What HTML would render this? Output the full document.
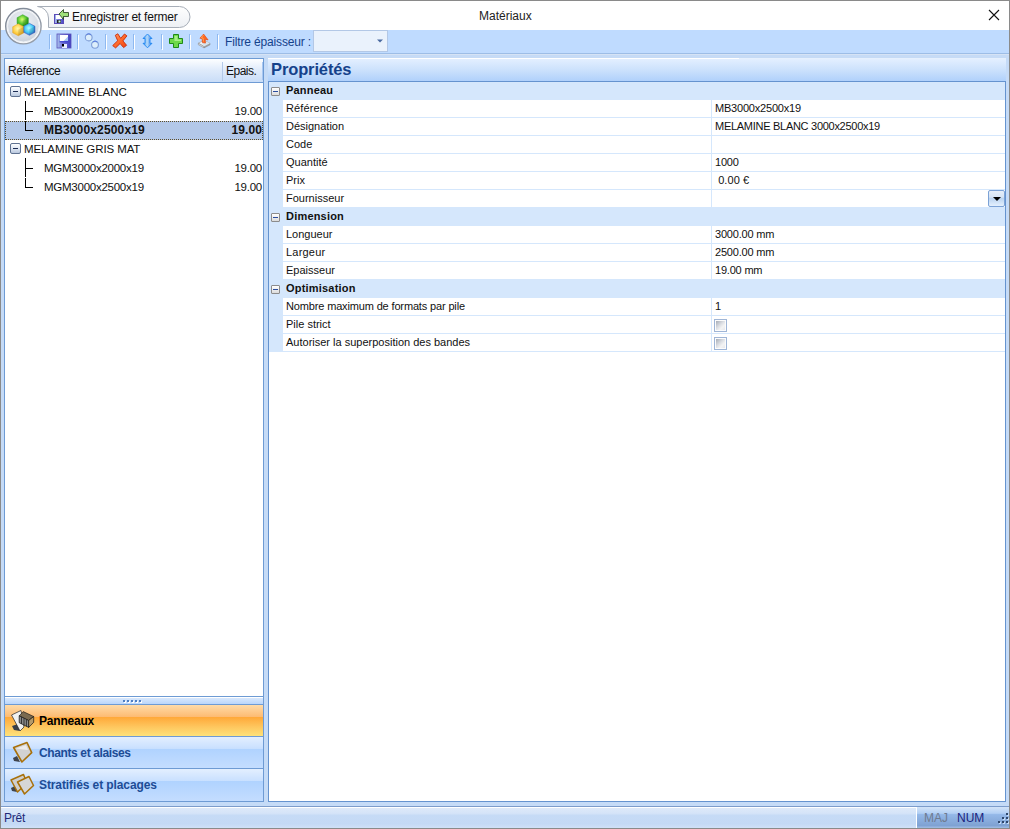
<!DOCTYPE html>
<html><head><meta charset="utf-8">
<style>
*{margin:0;padding:0;box-sizing:border-box}
html,body{width:1010px;height:829px;overflow:hidden;background:#c5dbf7;font-family:"Liberation Sans",sans-serif}
div,span,svg{position:absolute}
#bl{left:0;top:0;width:1px;height:829px;background:#8a8a8a}
#br{left:1009px;top:0;width:1px;height:829px;background:#8a8a8a}
#bt{left:0;top:0;width:1010px;height:1px;background:#8a8a8a}
#title{left:1px;top:1px;width:1008px;height:29px;background:#fff}
#ttext{left:479px;top:9px;font-size:12px;color:#222;white-space:pre}
#tb{left:1px;top:30px;width:1008px;height:23px;background:#bfdbff}
#tbline{left:1px;top:53px;width:1008px;height:1px;background:#9dbde6}
#strip{left:1px;top:54px;width:1008px;height:4px;background:linear-gradient(#d6e3f5 0,#d6e3f5 1px,#c6dbf6 1px)}
.sep{top:35px;width:2px;height:15px;border-left:1px solid #9fbfe8;border-right:1px solid #fff}
#tab{left:38px;top:6px;width:152px;height:22px;border:1px solid #a9b3bf;border-radius:3px 11px 11px 3px;background:linear-gradient(#fdfdfe,#eef1f5)}
#tabtxt{left:72px;top:10px;font-size:12px;color:#111;white-space:pre;letter-spacing:-0.22px}
#left{left:4px;top:58px;width:260px;height:744px;border:1px solid #6e9bd4;background:#fff}
#lhdr{left:0;top:0;width:258px;height:24px;background:linear-gradient(#fdfeff,#e1ecfb 45%,#c9ddf8);border-bottom:1px solid #6e9bd4}
.ht{top:5px;font-size:12px;color:#111;white-space:pre}
.tr{left:0;width:258px;height:19px;font-size:11.5px;color:#111;white-space:pre}
.tr span{top:3px;letter-spacing:-0.25px}
#right{left:268px;top:58px;width:738px;height:744px}
#phdr{left:0;top:0;width:738px;height:23px;background:linear-gradient(#e6f0fd 0,#e6f0fd 1px,#e3efff 1px,#cde2fc 50%,#b0d1fb)}
#ptxt{left:3px;letter-spacing:-0.12px;top:2px;font-size:16.5px;font-weight:bold;color:#15428b;white-space:pre}
#grid{left:0;top:23px;width:738px;height:721px;border:1px solid #6593cf;background:#fff}
.cat{left:0;width:736px;height:18px;background:#d5e7fc}
.cat span{left:17px;top:2px;font-size:11px;letter-spacing:0.2px;font-weight:bold;color:#111;white-space:pre}
.row{left:0;width:736px;height:18px;background:#fff;border-bottom:1px solid #d5e7fc}
.row .lm{left:0;top:-1px;width:14px;height:19px;background:#d5e7fc}
.row .k{left:17px;top:2px;font-size:11px;letter-spacing:0;color:#111;white-space:pre}
.row .vs{left:442px;top:0;width:1px;height:17px;background:#d5e7fc}
.row .v{left:446px;top:2px;font-size:11px;letter-spacing:-0.2px;color:#111;white-space:pre}
.mb{width:9px;height:9px;border:1px solid #8c8c8c;border-radius:1px;background:linear-gradient(#fff,#dcdcdc)}
.mb::after{content:"";position:absolute;left:1px;top:3px;width:5px;height:1px;background:#2b4d9e}
#status{left:1px;top:807px;width:1008px;height:21px;background:linear-gradient(#fff 0,#fff 1px,#dde9f9 1px,#d5e4f8 30%,#c6dbf6 40%,#c4d9f5 80%,#d0e1f7)}
#stline{left:1px;top:806px;width:1008px;height:1px;background:#7c9ccb}
#bb{left:0;top:828px;width:1010px;height:1px;background:#8a8a8a}
#st2{left:917px;top:807px;width:92px;height:21px;background:linear-gradient(#d2e3f8,#b2cff4 30%,#94b8e8 36%,#7fa2d3 88%,#a0bde4)}

.dd{left:719px;top:0;width:17px;height:17px;border:1px solid #7ca2d6;border-radius:2px;background:linear-gradient(#e6eef8,#d6e4f5 40%,#bcd4f0 50%,#d8e8fa 85%,#e4f0fd)}
.dd::after{content:"";position:absolute;left:3.5px;top:6px;border-left:4px solid transparent;border-right:4px solid transparent;border-top:4px solid #000}
.cb{left:445px;top:3px;width:13px;height:13px;border:1px solid #9fb5d6;background:#fcfcfc}
.cb::after{content:"";position:absolute;left:1px;top:1px;width:9px;height:9px;background:linear-gradient(135deg,#a6acb6,#dcdfe4 45%,#f4f4f4 70%,#e6e8ec)}

.nb{left:0;width:258px;height:31px;background:linear-gradient(#e3efff,#c9e0ff 37%,#b0d3ff 39%,#c4ddff)}
.nb.sel{background:linear-gradient(#ffdba8,#fdbb72 38%,#ffa838 39%,#fec65e 70%,#fee27a)}
.nb span{left:34px;top:9px;font-size:12px;font-weight:bold;color:#1d4c96;white-space:pre;letter-spacing:-0.2px}
.tm{width:11px;height:11px;border-color:#5f7291;border-radius:2px;background:linear-gradient(#fdfeff,#dfe7f3 50%,#b9c8de)}
.tm::after{left:2px;top:4px;width:5px;height:1px;background:#1f2f55}
</style></head><body>
<div id="bt"></div><div id="bl"></div><div id="br"></div>
<div id="title">
</div>
<span id="ttext">Matériaux</span>
<svg style="left:988px;top:9px" width="12" height="12" viewBox="0 0 12 12"><path d="M1 1L11 11M11 1L1 11" stroke="#111" stroke-width="1.1"/></svg>
<div id="tb"></div>
<div id="tbline"></div>
<div id="strip"></div>
<svg style="left:30px;top:0" width="170" height="32" viewBox="30 0 170 32"><defs><linearGradient id="tg" x1="0" y1="0" x2="0" y2="1"><stop offset="0" stop-color="#fefefe"/><stop offset="1" stop-color="#edf0f4"/></linearGradient></defs><path d="M37.5 6.5H179.5A10.5 10.5 0 0 1 179.5 27.5H48.5V18A11.5 11.5 0 0 0 37.5 6.5Z" fill="url(#tg)" stroke="#a7aeb8" stroke-width="1"/></svg>
<span id="tabtxt">Enregistrer et fermer</span>
<svg style="left:0;top:0" width="50" height="50" viewBox="0 0 50 50">
 <defs>
  <radialGradient id="lg" cx="0.5" cy="0.35" r="0.65"><stop offset="0" stop-color="#eef1f5"/><stop offset="0.7" stop-color="#d9dee6"/><stop offset="1" stop-color="#c8cfd9"/></radialGradient>
 </defs>
 <defs><linearGradient id="rg" x1="0" y1="0" x2="1" y2="1"><stop offset="0" stop-color="#7c8593"/><stop offset="1" stop-color="#9aa2ae"/></linearGradient></defs><circle cx="23.4" cy="26.2" r="17.7" fill="#f6f7f9" stroke="url(#rg)" stroke-width="1.4"/>
 <circle cx="23.4" cy="26.2" r="15.8" fill="url(#lg)" stroke="#eef1f5" stroke-width="1"/>
<defs><radialGradient id="cg" cx="0.45" cy="0.4" r="0.65"><stop offset="0" stop-color="#d8ff70"/><stop offset="0.55" stop-color="#5cc830"/><stop offset="1" stop-color="#149a18"/></radialGradient></defs>
 <g transform="translate(22.7,20.7)"><path d="M0 -6L5.6 -3V3L0 6L-5.6 3V-3Z" fill="url(#cg)" stroke="#2a9a20" stroke-width="0.5" stroke-linejoin="round"/><path d="M5.6 -3V3L0 6V0Z" fill="#000" opacity="0.12"/></g>
<defs><radialGradient id="yg" cx="0.45" cy="0.4" r="0.65"><stop offset="0" stop-color="#fff6b0"/><stop offset="0.55" stop-color="#ffd24a"/><stop offset="1" stop-color="#f0a818"/></radialGradient></defs>
 <g transform="translate(18.3,29.8)"><path d="M0 -6L5.6 -3V3L0 6L-5.6 3V-3Z" fill="url(#yg)" stroke="#e0a020" stroke-width="0.5" stroke-linejoin="round"/><path d="M5.6 -3V3L0 6V0Z" fill="#000" opacity="0.12"/></g>
<defs><radialGradient id="bg" cx="0.45" cy="0.4" r="0.65"><stop offset="0" stop-color="#b0f8ff"/><stop offset="0.55" stop-color="#48ccf6"/><stop offset="1" stop-color="#2a66d0"/></radialGradient></defs>
 <g transform="translate(29.4,29.3)"><path d="M0 -6L5.6 -3V3L0 6L-5.6 3V-3Z" fill="url(#bg)" stroke="#3050c0" stroke-width="0.5" stroke-linejoin="round"/><path d="M5.6 -3V3L0 6V0Z" fill="#000" opacity="0.12"/></g>
</svg>
<svg style="left:53px;top:8px" width="18" height="18" viewBox="0 0 18 18">
 <defs><linearGradient id="fg2" x1="0" y1="0" x2="1" y2="0"><stop offset="0" stop-color="#a9c6ef"/><stop offset="0.4" stop-color="#7a7ad8"/><stop offset="1" stop-color="#4848c8"/></linearGradient></defs><rect x="1.5" y="6.5" width="9" height="9" fill="url(#fg2)" stroke="#5a4ab8"/>
 <rect x="3" y="7" width="6" height="4" fill="#fff"/>
 <rect x="4" y="12" width="4" height="3" fill="#222"/><rect x="5.5" y="12.5" width="2" height="2" fill="#cfe"/>
 <path d="M6 6L10.5 1.5L10.5 4.5L15.5 4.5L15.5 8.5L10.5 8.5L10.5 11.5Z" fill="#9ee07a" stroke="#1f3a18" stroke-width="0.8"/>
</svg>
<svg style="left:56px;top:33px" width="16" height="16" viewBox="0 0 16 16">
 <defs><linearGradient id="fg" x1="0" y1="0" x2="1" y2="0"><stop offset="0" stop-color="#a9c6ef"/><stop offset="0.35" stop-color="#7a7ad8"/><stop offset="1" stop-color="#4040c0"/></linearGradient></defs>
 <rect x="1" y="1" width="14" height="14" fill="url(#fg)"/>
 <rect x="1" y="1" width="14" height="14" fill="none" stroke="#5a50b8" stroke-width="0.8"/>
 <rect x="4" y="2" width="8" height="6" fill="#fff"/><path d="M12 3.5V8H7.5Z" fill="#a8c8f5"/>
 <rect x="3.5" y="8.3" width="9" height="1" fill="#3a40d0"/>
 <rect x="6" y="11" width="5" height="4" fill="#e8f0ff"/><rect x="6" y="11" width="2" height="2.5" fill="#000"/>
</svg>
<svg style="left:83px;top:33px" width="16" height="16" viewBox="0 0 16 16">
 <path d="M6 5L12 11.5" stroke="#d4f0fb" stroke-width="3"/>
 <circle cx="5.7" cy="4.5" r="3.4" fill="#ddeefb" stroke="#7f9ed8" stroke-width="1.1"/>
 <circle cx="12" cy="11.8" r="3.4" fill="#ddeefb" stroke="#7f9ed8" stroke-width="1.1"/>
 <path d="M3.5 1.6A3.4 3.4 0 0 1 8 1.6M9.8 8.9A3.4 3.4 0 0 1 14.2 8.9" stroke="#5a7ee0" stroke-width="1" fill="none"/>
</svg>
<svg style="left:112px;top:33px" width="16" height="16" viewBox="0 0 16 16">
 <defs><linearGradient id="xg" x1="0" y1="0" x2="1" y2="1"><stop offset="0" stop-color="#ff9a6a"/><stop offset="0.5" stop-color="#ff6a2a"/><stop offset="1" stop-color="#f04010"/></linearGradient></defs>
 <path d="M3.3 2.3L5.8 0.8L8.7 5.3L12.5 1L14.9 2.9L10.9 7.9L14.6 12.3L11.6 14.6L8.1 10.5L3.6 14.9L0.7 12.6L5.7 7.7Z" fill="url(#xg)" stroke="#c82a08" stroke-width="0.9" stroke-linejoin="round"/>
</svg>
<svg style="left:142px;top:33px" width="12" height="16" viewBox="0 0 12 16">
 <defs><linearGradient id="ag" x1="0" y1="0" x2="1" y2="0"><stop offset="0" stop-color="#2a8af0"/><stop offset="0.45" stop-color="#b8dcfa"/><stop offset="1" stop-color="#2a7ae8"/></linearGradient></defs>
 <path d="M5.5 1L10 5.5H8V10.3H10L5.5 14.8L1 10.3H3V5.5H1Z" fill="url(#ag)" stroke="#1f86f0" stroke-width="0.9" stroke-linejoin="round"/>
</svg>
<svg style="left:168px;top:33px" width="16" height="16" viewBox="0 0 16 16">
 <path d="M5.5 1.5H10.5V5.5H14.5V10.5H10.5V14.5H5.5V10.5H1.5V5.5H5.5Z" fill="#6ed84a" stroke="#1f8a1a" stroke-width="1"/>
 <path d="M6.5 3H9.5V6.5H13V8H6.5Z" fill="#a8f08a"/>
</svg>
<svg style="left:196px;top:33px" width="16" height="16" viewBox="0 0 16 16">
 <path d="M2.3 10.2L8 7.3L14 10.3L8 13.4Z" fill="#f4f4f4" stroke="#9a9a9a" stroke-width="0.6"/>
 <path d="M2.3 10.2V11.8L8 14.9V13.4Z" fill="#d8d8d8" stroke="#8a8a8a" stroke-width="0.5"/>
 <path d="M8 13.4V14.9L14 11.8V10.3Z" fill="#a8a8a8" stroke="#7a7a7a" stroke-width="0.5"/>
 <path d="M5.5 9.8L8.8 8.3L14 10.3L8 13.4Z" fill="#d6e4ee"/>
 <path d="M7.6 1.1L3.9 5.2L6 5.6L6.5 9.6L9.5 10.1L9.1 6.3L12.1 6.9Z" fill="#ff6a1e" stroke="#e03a08" stroke-width="0.6" stroke-linejoin="round"/>
 <path d="M7.6 1.8L5.2 4.7L7 5L7.5 8.5" fill="none" stroke="#ffaa66" stroke-width="0.8"/>
</svg>

<div style="left:49px;top:34px;width:1px;height:15px;background:#8fb9f0"></div><div style="left:50px;top:35px;width:1px;height:15px;background:#fff"></div>
<div style="left:77px;top:34px;width:1px;height:15px;background:#8fb9f0"></div><div style="left:78px;top:35px;width:1px;height:15px;background:#fff"></div>
<div style="left:105px;top:34px;width:1px;height:15px;background:#8fb9f0"></div><div style="left:106px;top:35px;width:1px;height:15px;background:#fff"></div>
<div style="left:133px;top:34px;width:1px;height:15px;background:#8fb9f0"></div><div style="left:134px;top:35px;width:1px;height:15px;background:#fff"></div>
<div style="left:161px;top:34px;width:1px;height:15px;background:#8fb9f0"></div><div style="left:162px;top:35px;width:1px;height:15px;background:#fff"></div>
<div style="left:189px;top:34px;width:1px;height:15px;background:#8fb9f0"></div><div style="left:190px;top:35px;width:1px;height:15px;background:#fff"></div>
<div style="left:217px;top:34px;width:1px;height:15px;background:#8fb9f0"></div><div style="left:218px;top:35px;width:1px;height:15px;background:#fff"></div>
<span style="left:225px;top:35px;font-size:12px;color:#15428b;white-space:pre;letter-spacing:-0.15px">Filtre épaisseur :</span>
<div style="left:313px;top:30px;width:75px;height:22px;background:#eaf2fc;border:1px solid #b3c8e6"></div>
<svg style="left:377px;top:39px" width="6" height="4"><path d="M0 0.5H6L3 3.5Z" fill="#4a6aa0"/></svg>

<div id="left">
 <div id="lhdr">
  <span class="ht" style="left:3px;letter-spacing:-0.33px">Référence</span>
  <div style="left:217px;top:3px;width:1px;height:19px;background:#b4c9e8"></div>
  <span class="ht" style="left:221px;letter-spacing:-0.5px">Epais.</span><div style="left:257px;top:3px;width:1px;height:18px;background:#a9c8f2"></div>
 </div>

 <div class="tr" style="top:24px"><div class="mb tm" style="left:5px;top:3px"></div><span style="left:19px;letter-spacing:0.1px">MELAMINE BLANC</span></div>
 <div class="tr" style="top:43px"><div style="left:20px;top:-1px;width:1px;height:19px;background:#000"></div><div style="left:20px;top:9px;width:8px;height:1px;background:#000"></div><span style="left:39px">MB3000x2000x19</span><span style="right:1px">19.00</span></div>
 <div class="tr" style="top:62px;background:#b3c8e8;outline:1px dotted #5e4e28;outline-offset:-1px;font-weight:bold;font-size:12px"><div style="left:20px;top:0;width:1px;height:10px;background:#000"></div><div style="left:20px;top:9px;width:8px;height:1px;background:#000"></div><span style="left:39px;top:2px;letter-spacing:0.15px">MB3000x2500x19</span><span style="right:1px;top:2px;letter-spacing:0.1px">19.00</span></div>
 <div class="tr" style="top:81px"><div class="mb tm" style="left:5px;top:3px"></div><span style="left:19px;letter-spacing:-0.1px">MELAMINE GRIS MAT</span></div>
 <div class="tr" style="top:100px"><div style="left:20px;top:-1px;width:1px;height:19px;background:#000"></div><div style="left:20px;top:9px;width:8px;height:1px;background:#000"></div><span style="left:39px">MGM3000x2000x19</span><span style="right:1px">19.00</span></div>
 <div class="tr" style="top:119px"><div style="left:20px;top:0;width:1px;height:10px;background:#000"></div><div style="left:20px;top:9px;width:8px;height:1px;background:#000"></div><span style="left:39px">MGM3000x2500x19</span><span style="right:1px">19.00</span></div>

 <div style="left:0;top:637px;width:258px;height:1px;background:#6e9bd4"></div>
 <div style="left:0;top:638px;width:258px;height:7px;background:linear-gradient(#fff 0,#fff 1px,#d9e8fc 1px,#bad6fb)"></div><div style="left:119px;top:642px;width:2px;height:2px;background:#fff"></div><div style="left:118px;top:641px;width:2px;height:2px;background:#4f7fc4"></div><div style="left:123px;top:642px;width:2px;height:2px;background:#fff"></div><div style="left:122px;top:641px;width:2px;height:2px;background:#4f7fc4"></div><div style="left:127px;top:642px;width:2px;height:2px;background:#fff"></div><div style="left:126px;top:641px;width:2px;height:2px;background:#4f7fc4"></div><div style="left:131px;top:642px;width:2px;height:2px;background:#fff"></div><div style="left:130px;top:641px;width:2px;height:2px;background:#4f7fc4"></div><div style="left:135px;top:642px;width:2px;height:2px;background:#fff"></div><div style="left:134px;top:641px;width:2px;height:2px;background:#4f7fc4"></div>
 <div style="left:0;top:645px;width:258px;height:1px;background:#6e9bd4"></div>
 <div class="nb sel" style="top:646px"><svg style="left:3px;top:0px" width="30" height="31" viewBox="8 705 30 31">
 <path d="M12 726L18 724L20 731L14 730Z" fill="#3a3f48"/>
 <path d="M11.5 715L21 710.5L24 727L20 731Z" fill="#f2f2f2" stroke="#222" stroke-width="0.7"/>
 <path d="M19.2 715.8L23.2 711.6L33.7 716.5L28.7 720.5Z" fill="#7a6a50" stroke="#111" stroke-width="0.6"/>
 <path d="M19.2 715.8L28.7 720.5L28.7 727.4L19.2 722.7Z" fill="#8a8a8a" stroke="#111" stroke-width="0.7"/>
 <path d="M21.5 717V724M24 718.2V725.3M26.4 719.4V726.5" stroke="#2a2a2a" stroke-width="0.9"/>
 <path d="M28.7 720.5L33.7 716.5V722.3L28.7 727.4Z" fill="#b59a6a" stroke="#111" stroke-width="0.7"/>
</svg><span style="color:#000">Panneaux</span></div>
 <div style="left:0;top:677px;width:258px;height:1px;background:#6e9bd4"></div>
 <div class="nb" style="top:678px"><svg style="left:3px;top:0px" width="30" height="31" viewBox="8 737 30 31">
 <path d="M13 758L17 756L20 762L14 761Z" fill="#40454d"/>
 <path d="M13.6 747.5L27 742.5L31.7 752.6L21.9 762Z" fill="#d2d2d2" stroke="#a8700a" stroke-width="1.6" stroke-linejoin="round"/>
 <path d="M16 748.5L26 745L28 750Z" fill="#ececec"/>
</svg><span style="letter-spacing:-0.38px">Chants et alaises</span></div>
 <div style="left:0;top:709px;width:258px;height:1px;background:#6e9bd4"></div>
 <div class="nb" style="top:710px;height:32px"><svg style="left:3px;top:0px" width="30" height="31" viewBox="8 769 30 31">
 <path d="M11 788L15 786L17 792L12 791Z" fill="#40454d"/>
 <path d="M11 780L23.5 774.5L27 783L17.5 792Z" fill="#cfcfcf" stroke="#a8700a" stroke-width="1.5" stroke-linejoin="round"/>
 <path d="M17.5 782L29 776.5L33.5 785.5L24.5 794Z" fill="#d6d6d6" stroke="#a8700a" stroke-width="1.5" stroke-linejoin="round"/>
</svg><span style="letter-spacing:-0.1px">Stratifiés et placages</span></div>
</div>

<div id="right">
 <div id="phdr"><div style="left:0;top:0;width:471px;height:1px;background:#fff"></div><span id="ptxt">Propriétés</span></div>
 <div id="grid">
  <div class="cat" style="top:0px"><div class="mb" style="left:2px;top:5px"></div><span>Panneau</span></div>
  <div class="row" style="top:18px"><div class="lm"></div><span class="k" style="letter-spacing:0.13px">Référence</span><div class="vs"></div><span class="v">MB3000x2500x19</span></div>
  <div class="row" style="top:36px"><div class="lm"></div><span class="k">Désignation</span><div class="vs"></div><span class="v" style="letter-spacing:-0.28px">MELAMINE BLANC 3000x2500x19</span></div>
  <div class="row" style="top:54px"><div class="lm"></div><span class="k">Code</span><div class="vs"></div><span class="v"></span></div>
  <div class="row" style="top:72px"><div class="lm"></div><span class="k">Quantité</span><div class="vs"></div><span class="v">1000</span></div>
  <div class="row" style="top:90px"><div class="lm"></div><span class="k">Prix</span><div class="vs"></div><span class="v" style="letter-spacing:0.1px"> 0.00 €</span></div>
  <div class="row" style="top:108px"><div class="lm"></div><span class="k">Fournisseur</span><div class="vs"></div><div class="dd"></div></div>
  <div class="cat" style="top:126px"><div class="mb" style="left:2px;top:5px"></div><span>Dimension</span></div>
  <div class="row" style="top:144px"><div class="lm"></div><span class="k">Longueur</span><div class="vs"></div><span class="v">3000.00 mm</span></div>
  <div class="row" style="top:162px"><div class="lm"></div><span class="k" style="letter-spacing:0.2px">Largeur</span><div class="vs"></div><span class="v">2500.00 mm</span></div>
  <div class="row" style="top:180px"><div class="lm"></div><span class="k">Epaisseur</span><div class="vs"></div><span class="v">19.00 mm</span></div>
  <div class="cat" style="top:198px"><div class="mb" style="left:2px;top:5px"></div><span>Optimisation</span></div>
  <div class="row" style="top:216px"><div class="lm"></div><span class="k" style="letter-spacing:-0.15px">Nombre maximum de formats par pile</span><div class="vs"></div><span class="v">1</span></div>
  <div class="row" style="top:234px"><div class="lm"></div><span class="k">Pile strict</span><div class="vs"></div><div class="cb"></div></div>
  <div class="row" style="top:252px"><div class="lm"></div><span class="k">Autoriser la superposition des bandes</span><div class="vs"></div><div class="cb"></div></div>
 </div>
</div>

<div id="stline"></div>
<div id="status"></div>
<div id="st2"></div>
<div style="left:916px;top:807px;width:1px;height:21px;background:#fff"></div>
<div id="bb"></div>
<span style="left:924px;top:811px;font-size:12px;color:#6f7b90;white-space:pre">MAJ</span>
<span style="left:957px;top:811px;font-size:12px;color:#1b1f7e;white-space:pre">NUM</span>
<svg style="left:990px;top:808px" width="19" height="20" viewBox="990 808 19 20"><rect x="1007" y="814" width="2" height="2" fill="#c5dbf6"/><rect x="1003" y="818" width="2" height="2" fill="#c5dbf6"/><rect x="1007" y="818" width="2" height="2" fill="#c5dbf6"/><rect x="999" y="822" width="2" height="2" fill="#c5dbf6"/><rect x="1003" y="822" width="2" height="2" fill="#c5dbf6"/><rect x="1007" y="822" width="2" height="2" fill="#c5dbf6"/><rect x="1006" y="813" width="2" height="2" fill="#2e476c"/><rect x="1002" y="817" width="2" height="2" fill="#2e476c"/><rect x="1006" y="817" width="2" height="2" fill="#2e476c"/><rect x="998" y="821" width="2" height="2" fill="#2e476c"/><rect x="1002" y="821" width="2" height="2" fill="#2e476c"/><rect x="1006" y="821" width="2" height="2" fill="#2e476c"/></svg>
<span style="left:4px;top:811px;font-size:12px;color:#1f2a78;letter-spacing:-0.2px">Prêt</span>
</body></html>
